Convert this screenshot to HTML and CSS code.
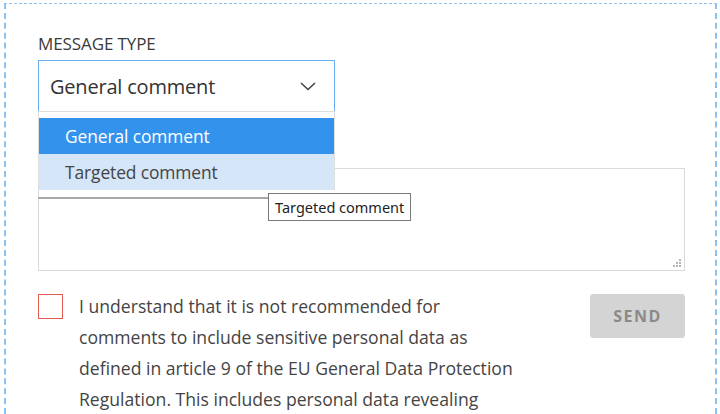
FILE: index.html
```html
<!DOCTYPE html>
<html lang="en">
<head>
<meta charset="utf-8">
<title>Message form</title>
<link rel="stylesheet" href="styles.css">
</head>
<body>
<div class="frame">
  <form class="form">
    <div class="field-label">MESSAGE TYPE</div>
    <div class="select-wrap">
      <div class="select">
        <span class="select-value">General comment</span>
        <svg class="chevron" width="16" height="9" viewBox="0 0 16 9"><polyline points="1,1 8,7.5 15,1" fill="none" stroke="#444" stroke-width="1.6"/></svg>
      </div>
      <ul class="dropdown">
        <li class="option selected">General comment</li>
        <li class="option hovered">Targeted comment</li>
      </ul>
      <div class="tooltip">Targeted comment</div>
    </div>
    <div class="textarea">
      <svg class="grip" width="8" height="8" viewBox="0 0 8 8"><g fill="#b5b5b5"><rect x="6" y="0" width="2" height="2"/><rect x="3" y="3" width="2" height="2"/><rect x="6" y="3" width="2" height="2"/><rect x="0" y="6" width="2" height="2"/><rect x="3" y="6" width="2" height="2"/><rect x="6" y="6" width="2" height="2"/></g></svg>
    </div>
    <div class="consent">
      <span class="checkbox"></span>
      <p class="consent-text">I understand that it is not recommended for<br>comments to include sensitive personal data as<br>defined in article 9 of the EU General Data Protection<br>Regulation. This includes personal data revealing</p>
      <button type="button" class="send">SEND</button>
    </div>
  </form>
</div>
</body>
</html>
```
FILE: styles.css
```css
html, body {
  margin: 0;
  padding: 0;
  background: #fff;
  overflow: hidden;
}
body {
  font-family: "Open Sans", "Noto Sans", sans-serif;
  color: #333;
}
.frame {
  margin: 3px 3px 0 4px;
  border: 1px dashed #8cc2f2;
  border-left-width: 2px;
  border-right-width: 2px;
  border-bottom: none;
  padding: 30px 29px 0 32px;
  height: 411px;
  box-sizing: border-box;
}
.form {
  width: 647px;
}
.field-label {
  font-size: 17px;
  line-height: 20px;
  color: #3a3a3a;
  margin-bottom: 6px;
  letter-spacing: -0.1px;
}
.select-wrap {
  position: relative;
  width: 297px;
}
.select {
  height: 51px;
  box-sizing: border-box;
  border: 1px solid #6aaef2;
  border-bottom: none;
  display: flex;
  align-items: center;
  justify-content: space-between;
  padding: 0 18px 0 11px;
  background: #fff;
}
.select-value {
  font-size: 20px;
  color: #333;
  letter-spacing: -0.2px;
}
.chevron {
  display: block;
  margin-top: 1px;
}
.dropdown {
  position: absolute;
  top: 51px;
  left: 0;
  width: 297px;
  box-sizing: border-box;
  margin: 0;
  padding: 6px 0 0;
  list-style: none;
  border: 1px solid #dedede;
  border-bottom: none;
  background: #fff;
  z-index: 2;
}
.dropdown::after {
  content: "";
  position: absolute;
  left: -1px;
  right: -1px;
  bottom: -9px;
  height: 2px;
  background: #a8a8a8;
}
.option {
  height: 36px;
  line-height: 36px;
  padding-left: 26px;
  font-size: 17.4px;
  letter-spacing: -0.1px;
}
.option.selected {
  background: #3392ec;
  color: #fff;
}
.option.hovered {
  background: #d5e6f9;
  color: #444;
}
.tooltip {
  position: absolute;
  left: 230px;
  top: 133px;
  z-index: 3;
  background: #fff;
  border: 1px solid #7a7a7a;
  font-family: "Noto Sans", "Open Sans", sans-serif;
  font-size: 14.5px;
  line-height: 26px;
  height: 26px;
  padding: 0 6px;
  white-space: nowrap;
  color: #1e1e1e;
}
.textarea {
  margin-top: 57px;
  height: 103px;
  box-sizing: border-box;
  border: 1px solid #dadada;
  position: relative;
}
.grip {
  position: absolute;
  right: 3px;
  bottom: 3px;
}
.consent {
  margin-top: 20px;
  display: flex;
  align-items: flex-start;
}
.checkbox {
  flex: none;
  width: 25px;
  height: 25px;
  box-sizing: border-box;
  border: 1px solid #e25b52;
  margin-top: 3px;
}
.consent-text {
  margin: 0 0 0 16px;
  width: 460px;
  font-size: 17.6px;
  line-height: 31px;
  color: #444;
  white-space: nowrap;
}
.send {
  margin-left: auto;
  margin-top: 3px;
  width: 95px;
  height: 44px;
  border: none;
  border-radius: 3px;
  background: #d4d4d4;
  color: #8a8a8a;
  font-family: "Open Sans", sans-serif;
  font-weight: 700;
  font-size: 16px;
  letter-spacing: 1.5px;
  padding: 0;
}
```
